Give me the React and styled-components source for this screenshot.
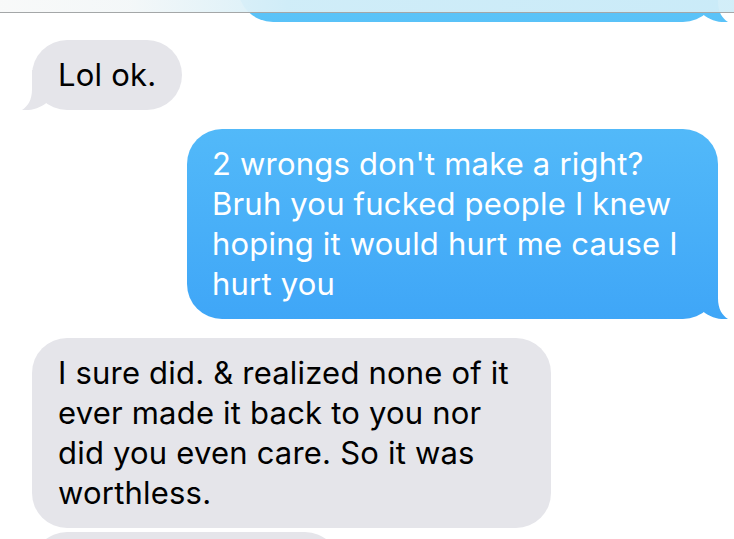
import React from "react";
import styled, { createGlobalStyle } from "styled-components";

const Global = createGlobalStyle`
  html, body { margin: 0; padding: 0; background: #ffffff; }
  body { font-family: Inter, "Noto Sans", "Liberation Sans", sans-serif; -webkit-font-smoothing: antialiased; }
`;

const BLUE = `linear-gradient(to bottom, #5bc4f8 0px, #51b8f9 140px, #3fa6f7 320px, #3097f5 539px) fixed`;
const GRAY = "#e5e5ea";

const Screen = styled.div`
  position: relative;
  width: 734px;
  height: 539px;
  overflow: hidden;
  background: #ffffff;
`;

const NavBar = styled.div`
  position: absolute;
  top: 0;
  left: 0;
  right: 0;
  height: 12px;
  z-index: 5;
  border-bottom: 1px solid #a4a7a8;
  background: linear-gradient(
    to right,
    rgba(248, 249, 249, 0.97) 0px,
    rgba(243, 247, 248, 0.95) 130px,
    rgba(214, 239, 248, 0.95) 290px,
    rgba(208, 237, 248, 0.95) 100%
  );
`;

const Thread = styled.div`
  display: flex;
  flex-direction: column;
  padding: 0 16px 0 32px;
`;

const Bubble = styled.div`
  position: relative;
  box-sizing: border-box;
  align-self: ${(p) => (p.$me ? "flex-end" : "flex-start")};
  width: ${(p) => p.$w}px;
  margin-top: ${(p) => p.$mt}px;
  ${(p) => (p.$h ? `height: ${p.$h}px;` : "")}
  padding: 15px 16px 15px ${(p) => (p.$me ? 25 : 26)}px;
  border-radius: 35px;
  color: ${(p) => (p.$me ? "#ffffff" : "#000000")};
  background: ${(p) => (p.$me ? BLUE : GRAY)};
  font-size: 31px;
  line-height: 40px;
  letter-spacing: 0.2px;
`;

const Line = styled.span`
  display: block;
  white-space: nowrap;
`;

const Tail = styled.div`
  position: absolute;
  bottom: 0;
  width: 32px;
  height: 40px;
  background: ${(p) => (p.$me ? BLUE : GRAY)};
  clip-path: path("M 22 0 L 22 19 C 22 30 26 36 32 40 C 23 41 14 38 7 32.5 L 0 32.5 L 0 0 Z");
  ${(p) =>
    p.$me
      ? "right: -10px;"
      : "left: -10px; transform: scaleX(-1);"}
`;

const messages = [
  { me: true, w: 480, h: 100, mt: -78, tail: true, lines: [] },
  { me: false, w: 150, mt: 18, tail: true, lines: ["Lol ok."] },
  {
    me: true,
    w: 531,
    mt: 19,
    tail: true,
    lines: [
      "2 wrongs don't make a right?",
      "Bruh you fucked people I knew",
      "hoping it would hurt me cause I",
      "hurt you",
    ],
  },
  {
    me: false,
    w: 519,
    mt: 19,
    tail: false,
    lines: [
      "I sure did. & realized none of it",
      "ever made it back to you nor",
      "did you even care. So it was",
      "worthless.",
    ],
  },
  { me: false, w: 308, h: 80, mt: 4, tail: false, lines: [] },
];

export default function App() {
  return (
    <>
      <Global />
      <Screen>
        <NavBar />
        <Thread>
          {messages.map((m, i) => (
            <Bubble key={i} $me={m.me} $w={m.w} $h={m.h} $mt={m.mt}>
              {m.lines.map((l, j) => (
                <Line key={j}>{l}</Line>
              ))}
              {m.tail && <Tail $me={m.me} />}
            </Bubble>
          ))}
        </Thread>
      </Screen>
    </>
  );
}
